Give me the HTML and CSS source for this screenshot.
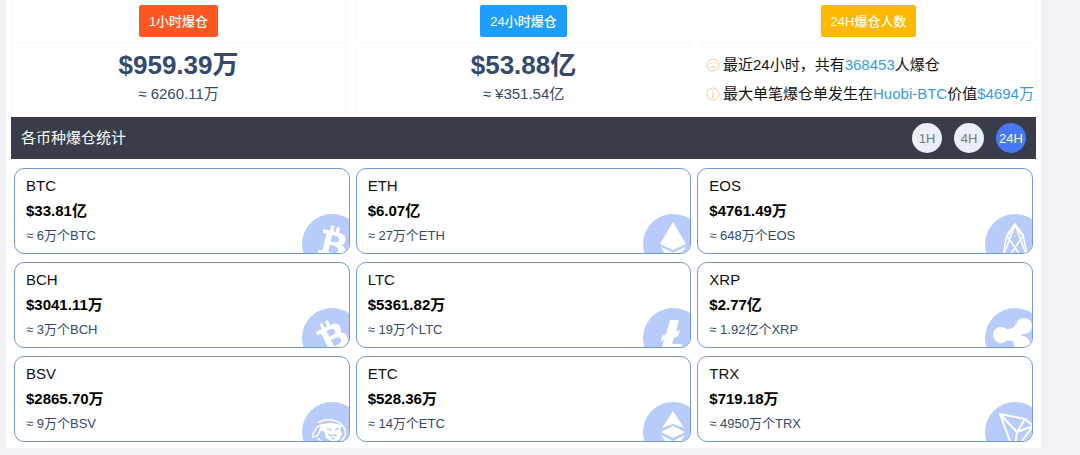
FILE: index.html
```html
<!DOCTYPE html>
<html lang="zh-CN">
	<head>
		<meta charset="utf-8">
		<meta name="viewport" content="width=device-width, initial-scale=1">
		<title>爆仓统计</title>
		<link rel="stylesheet" href="styles.css">
	</head>
	<body>
		<div class="panel">
			<div class="summary">
				<div class="summary-card">
					<div class="summary-head"><button type="button" class="btn btn-red">1小时爆仓</button></div>
					<div class="summary-body">
						<div class="amount">$959.39万</div>
						<div class="approx">≈ 6260.11万</div>
					</div>
				</div>
				<div class="summary-card">
					<div class="summary-head"><button type="button" class="btn btn-blue">24小时爆仓</button></div>
					<div class="summary-body">
						<div class="amount">$53.88亿</div>
						<div class="approx">≈ ¥351.54亿</div>
					</div>
				</div>
				<div class="summary-card">
					<div class="summary-head"><button type="button" class="btn btn-yellow">24H爆仓人数</button></div>
					<div class="summary-body info">
						<div class="info-line">
							<svg class="info-icon" viewBox="0 0 14 14"><circle cx="7" cy="7" r="6"/><path d="M4 5.2h1.5M8.500 5.200h1.500M4.500 10c1-2 4-2 5 0"/></svg>
							<p>最近24小时，共有<span class="mark">368453</span>人爆仓</p>
						</div>
						<div class="info-line">
							<svg class="info-icon" viewBox="0 0 14 14"><circle cx="7" cy="7" r="6"/><path d="M7 3.500v1.200M6 6.200h1v4M6 10.200h2"/></svg>
							<p>最大单笔爆仓单发生在<span class="mark">Huobi-BTC</span>价值<span class="mark">$4694万</span></p>
						</div>
					</div>
				</div>
			</div>

			<div class="bar">
				<h2>各币种爆仓统计</h2>
				<div class="periods">
					<button type="button" class="period">1H</button>
					<button type="button" class="period">4H</button>
					<button type="button" class="period active">24H</button>
				</div>
			</div>

			<div class="coins">
				<div class="coin">
					<div class="coin-name">BTC</div>
					<div class="coin-value">$33.81亿</div>
					<div class="coin-count">≈ 6万个BTC</div>
					<svg class="coin-icon" viewBox="0 0 60 60">
						<circle class="disc" cx="30" cy="30" r="30"/>
						<path id="bitcoin" class="fill" transform="scale(1.875)" d="M23.189 14.02c.314-2.096-1.283-3.223-3.465-3.975l.708-2.84-1.728-.43-.69 2.765c-.454-.114-.92-.22-1.385-.326l.695-2.783L15.596 6l-.708 2.839c-.376-.086-.746-.17-1.104-.26l.002-.009-2.384-.595-.46 1.846s1.283.294 1.256.312c.7.175.826.638.805 1.006l-.806 3.235c.048.012.11.03.18.057l-.183-.045-1.13 4.532c-.086.212-.303.531-.793.41.018.025-1.256-.313-1.256-.313l-.858 1.978 2.25.561c.418.105.828.215 1.231.318l-.715 2.872 1.727.43.708-2.84c.472.127.93.245 1.378.357l-.706 2.828 1.728.43.715-2.866c2.948.558 5.164.333 6.097-2.333.752-2.146-.037-3.385-1.588-4.192 1.13-.26 1.98-1.003 2.207-2.538zm-3.95 5.538c-.533 2.147-4.148.986-5.32.695l.95-3.805c1.172.293 4.929.872 4.37 3.11zm.535-5.569c-.487 1.953-3.495.96-4.47.717l.86-3.45c.975.243 4.118.696 3.61 2.733z"/>
					</svg>
				</div>
				<div class="coin">
					<div class="coin-name">ETH</div>
					<div class="coin-value">$6.07亿</div>
					<div class="coin-count">≈ 27万个ETH</div>
					<svg class="coin-icon" viewBox="0 0 60 60">
						<circle class="disc" cx="30" cy="30" r="30"/>
						<path class="fill" d="M30 8 17 30l13 6 13-6zM17 32.500l13 6 13-6L30 51z"/>
					</svg>
				</div>
				<div class="coin">
					<div class="coin-name">EOS</div>
					<div class="coin-value">$4761.49万</div>
					<div class="coin-count">≈ 648万个EOS</div>
					<svg class="coin-icon" viewBox="0 0 60 60">
						<circle class="disc" cx="30" cy="30" r="30"/>
						<path class="fill" d="M30 9l-8 11-1 5 9-12 9 12-1-5z"/>
						<path class="line" d="M30 10l-8 11-4 20 12 9 12-9-4-20zM30 11 19 40M30 11l11 29M22 22l15 22M38 22 23 44"/>
					</svg>
				</div>
				<div class="coin">
					<div class="coin-name">BCH</div>
					<div class="coin-value">$3041.11万</div>
					<div class="coin-count">≈ 3万个BCH</div>
					<svg class="coin-icon" viewBox="0 0 60 60">
						<circle class="disc" cx="30" cy="30" r="30"/>
						<use href="#bitcoin" transform="rotate(-40 30 30)"/>
					</svg>
				</div>
				<div class="coin">
					<div class="coin-name">LTC</div>
					<div class="coin-value">$5361.82万</div>
					<div class="coin-count">≈ 19万个LTC</div>
					<svg class="coin-icon" viewBox="0 0 60 60">
						<circle class="disc" cx="30" cy="30" r="30"/>
						<path class="fill" d="M27 12h9l-3 11 4-1-2 6-4 2-2 6h10l-1 7H18l3-11-3 1 1-5 4-2z"/>
					</svg>
				</div>
				<div class="coin">
					<div class="coin-name">XRP</div>
					<div class="coin-value">$2.77亿</div>
					<div class="coin-count">≈ 1.92亿个XRP</div>
					<svg class="coin-icon" viewBox="0 0 60 60">
						<circle class="disc" cx="30" cy="30" r="30"/>
						<circle class="fill" cx="16" cy="27" r="8"/>
						<circle class="fill" cx="39" cy="18" r="8"/>
						<circle class="fill" cx="37" cy="36" r="8"/>
						<path class="fill" d="M17 20c6 2 12 1 14-4l9 9c-4 2-5 3-3 4l-8 6c-2-3-7-3-12-1z"/>
					</svg>
				</div>
				<div class="coin">
					<div class="coin-name">BSV</div>
					<div class="coin-value">$2865.70万</div>
					<div class="coin-count">≈ 9万个BSV</div>
					<svg class="coin-icon" viewBox="0 0 60 60">
						<circle class="disc" cx="30" cy="30" r="30"/>
						<path class="line" d="M16 21c7-5 20-4 25 3 4 5 3 11-2 15M11 32l4-7 4-2 4 2-5 4-3 5-4 1zM16 36c2 3 5 5 9 6"/>
						<path class="fill" d="M20 22l9-1 11 2-2 5 2 4-3 6-6 2-7-4-2-7-5-1z"/>
						<path class="detail" d="M25 27l5 1M33 28l4-2M26 32l3 2 3-1 3 1M29 37l4-1"/>
					</svg>
				</div>
				<div class="coin">
					<div class="coin-name">ETC</div>
					<div class="coin-value">$528.36万</div>
					<div class="coin-count">≈ 14万个ETC</div>
					<svg class="coin-icon" viewBox="0 0 60 60">
						<circle class="disc" cx="30" cy="30" r="30"/>
						<path class="fill" d="M30 9 19 26l11-4 11 4zM30 24l-12 6 12 6 12-6zM18 33l12 6 12-6-12 18z"/>
					</svg>
				</div>
				<div class="coin">
					<div class="coin-name">TRX</div>
					<div class="coin-value">$719.18万</div>
					<div class="coin-count">≈ 4950万个TRX</div>
					<svg class="coin-icon" viewBox="0 0 60 60">
						<circle class="disc" cx="30" cy="30" r="30"/>
						<path class="line thick" d="M15 12l25 5 8 7-19 26zM15 12l17 18 16-6M32 30l-3 20M32 30l8-13"/>
					</svg>
				</div>
			</div>
		</div>
	</body>
</html>
```
FILE: styles.css
```css
* {
	box-sizing: border-box;
}

body {
	margin: 0;
	background: #f0f2f5;
	font-family: "Liberation Sans", "Noto Sans CJK SC", sans-serif;
	font-size: 15px;
	color: #111;
}

button {
	border: none;
	font-family: inherit;
	font-size: 13px;
	cursor: pointer;
}

h2, p {
	margin: 0;
	font-size: 15px;
	font-weight: normal;
}

.panel {
	margin: 0 39px 0 6px;
	padding: 0 5px 6px;
	background: #fff;
}

.summary {
	display: grid;
	grid-template-columns: repeat(3, minmax(0, 1fr));
	gap: 10px;
	margin-bottom: 3px;
}

.summary-card {
	border: 1px solid #fafafa;
	border-top: none;
}

.summary-head {
	display: flex;
	justify-content: center;
	padding: 5px 0;
	border-bottom: 1px solid #f8f8f8;
}

.summary-body {
	height: 70px;
	padding-top: 7px;
	text-align: center;
	color: #34496b;
}

.btn {
	height: 32px;
	padding: 0 10px 2px;
	border-radius: 2px;
	color: #fff;
	font-weight: 500;
}

.btn-red {
	background: #ff5722;
}

.btn-blue {
	background: #1e9fff;
}

.btn-yellow {
	background: #ffb800;
}

.amount {
	font-size: 26px;
	font-weight: bold;
	line-height: 30px;
}

.approx {
	line-height: 28px;
}

.summary-body.info {
	padding-left: 4px;
	text-align: left;
	color: #111;
}

.info-line {
	display: flex;
	align-items: center;
	gap: 3px;
	line-height: 29px;
	white-space: nowrap;
}

.info-icon {
	flex: none;
	width: 14px;
	height: 14px;
	fill: none;
	stroke: #f5c983;
}

.mark {
	color: #3a9be0;
}

.bar {
	display: flex;
	align-items: center;
	justify-content: space-between;
	height: 42px;
	padding: 0 10px;
	background: #393d49;
	color: #fff;
}

.bar h2 {
	padding-bottom: 4px;
}

.periods {
	display: flex;
	gap: 12px;
}

.period {
	width: 30px;
	height: 30px;
	padding: 0;
	border-radius: 50%;
	background: #ebeefb;
	color: #777;
}

.period.active {
	background: #4878f5;
	color: #fff;
}

.coins {
	display: grid;
	grid-template-columns: repeat(3, minmax(0, 1fr));
	gap: 8px 6px;
	padding: 9px 3px 0;
}

.coin {
	position: relative;
	overflow: hidden;
	padding: 4px 11px 5px;
	border: 1px solid #6f97da;
	border-radius: 10px;
	line-height: 25px;
}

.coin-name {
	color: #111;
}

.coin-value {
	color: #000;
	font-weight: bold;
}

.coin-count {
	font-size: 13px;
	color: #34496b;
}

/* coin logo, cut off by the card corner */
.coin-icon {
	position: absolute;
	right: -13px;
	bottom: -21px;
	width: 60px;
	height: 60px;
}

.disc {
	fill: #b7ccfb;
}

.fill {
	fill: #fff;
}

.line {
	fill: none;
	stroke: #fff;
	stroke-width: 1.5;
	stroke-linejoin: round;
}

.line.thick {
	stroke-width: 2;
}

.detail {
	fill: none;
	stroke: #b7ccfb;
	stroke-width: 1.5;
}
```
